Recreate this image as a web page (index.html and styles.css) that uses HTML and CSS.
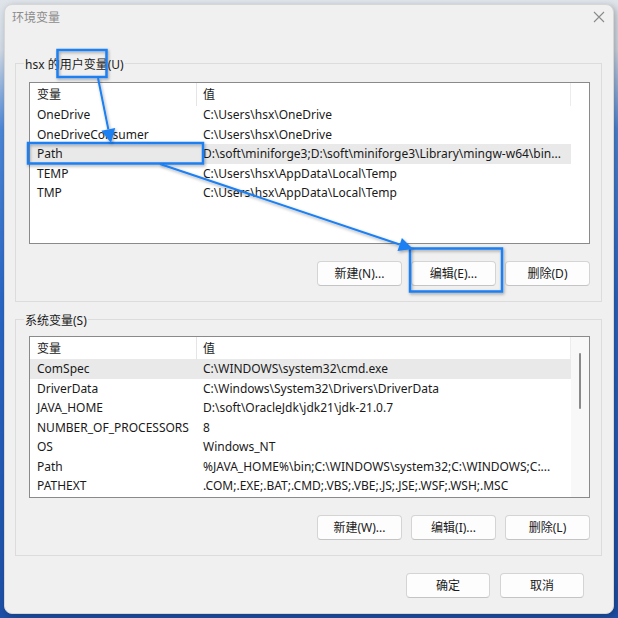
FILE: index.html
```html
<!DOCTYPE html>
<html lang="zh-CN">
<head>
<meta charset="utf-8">
<title>环境变量</title>
<link rel="stylesheet" href="styles.css">
</head>
<body>
<div class="window">
  <div class="titlebar">
    <span class="title">环境变量</span>
    <svg class="close" width="12" height="12" viewBox="0 0 12 12"><path d="M1 1L11 11M11 1L1 11" stroke="#8a8a8a" stroke-width="1.1" fill="none"/></svg>
  </div>
  <div class="content">
    <fieldset class="group">
      <legend>hsx 的用户变量(U)</legend>
      <div class="list">
        <div class="list-body">
          <div class="row head"><span class="c1">变量</span><span class="c2">值</span></div>
          <div class="row"><span class="c1">OneDrive</span><span class="c2">C:\Users\hsx\OneDrive</span></div>
          <div class="row"><span class="c1">OneDriveConsumer</span><span class="c2">C:\Users\hsx\OneDrive</span></div>
          <div class="row sel"><span class="c1">Path</span><span class="c2">D:\soft\miniforge3;D:\soft\miniforge3\Library\mingw-w64\bin...</span></div>
          <div class="row"><span class="c1">TEMP</span><span class="c2">C:\Users\hsx\AppData\Local\Temp</span></div>
          <div class="row"><span class="c1">TMP</span><span class="c2">C:\Users\hsx\AppData\Local\Temp</span></div>
        </div>
        <div class="scroll plain"></div>
      </div>
      <div class="buttons">
        <button class="btn">新建(N)...</button>
        <button class="btn">编辑(E)...</button>
        <button class="btn">删除(D)</button>
      </div>
    </fieldset>
    <fieldset class="group">
      <legend>系统变量(S)</legend>
      <div class="list">
        <div class="list-body">
          <div class="row head"><span class="c1">变量</span><span class="c2">值</span></div>
          <div class="row sel"><span class="c1">ComSpec</span><span class="c2">C:\WINDOWS\system32\cmd.exe</span></div>
          <div class="row"><span class="c1">DriverData</span><span class="c2">C:\Windows\System32\Drivers\DriverData</span></div>
          <div class="row"><span class="c1">JAVA_HOME</span><span class="c2">D:\soft\OracleJdk\jdk21\jdk-21.0.7</span></div>
          <div class="row"><span class="c1">NUMBER_OF_PROCESSORS</span><span class="c2">8</span></div>
          <div class="row"><span class="c1">OS</span><span class="c2">Windows_NT</span></div>
          <div class="row"><span class="c1">Path</span><span class="c2">%JAVA_HOME%\bin;C:\WINDOWS\system32;C:\WINDOWS;C:...</span></div>
          <div class="row"><span class="c1">PATHEXT</span><span class="c2">.COM;.EXE;.BAT;.CMD;.VBS;.VBE;.JS;.JSE;.WSF;.WSH;.MSC</span></div>
        </div>
        <div class="scroll track"><div class="thumb"></div></div>
      </div>
      <div class="buttons">
        <button class="btn">新建(W)...</button>
        <button class="btn">编辑(I)...</button>
        <button class="btn">删除(L)</button>
      </div>
    </fieldset>
    <div class="dialog-buttons">
      <button class="btn ok">确定</button>
      <button class="btn">取消</button>
    </div>
  </div>
</div>
<svg class="annot" width="618" height="618" viewBox="0 0 618 618">
  <defs>
    <filter id="sh" x="-20%" y="-20%" width="140%" height="140%">
      <feDropShadow dx="1" dy="1.5" stdDeviation="1.5" flood-color="#000" flood-opacity="0.35"/>
    </filter>
  </defs>
  <g filter="url(#sh)" stroke="#1b7ff2" fill="none" stroke-width="2.5">
    <rect x="57.5" y="50" width="49" height="27"/>
    <rect x="28" y="143" width="175" height="20.5"/>
    <rect x="410" y="248.5" width="92" height="43"/>
  </g>
  <g filter="url(#sh)">
    <line x1="98" y1="78" x2="108.3" y2="129.3" stroke="#1b7ff2" stroke-width="2"/>
    <polygon points="101.4,130.7 115.2,128 111,143" fill="#1b7ff2"/>
    <line x1="160" y1="164" x2="399.7" y2="244.5" stroke="#1b7ff2" stroke-width="2"/>
    <polygon points="397.5,251.1 401.9,237.9 413,249" fill="#1b7ff2"/>
  </g>
</svg>
</body>
</html>
```

FILE: styles.css
```css
html, body {
  margin: 0;
  padding: 0;
}
body {
  width: 618px;
  height: 618px;
  overflow: hidden;
  position: relative;
  background: linear-gradient(180deg, #dfe4ea 0px, #cfd8e3 50px, #4b86d6 130px, #2a66c4 300px, #1d4fa6 618px);
  font-family: "Noto Sans", "Noto Sans CJK SC", sans-serif;
  font-size: 12px;
  color: #000;
}
.window {
  margin: 4px 4px 0 4px;
  width: 610px;
  height: 610px;
  box-sizing: border-box;
  background: #f0f0f0;
  border-radius: 8px;
  border: 1px solid #d6d6d6;
  box-shadow: 2px 2px 6px rgba(0, 0, 0, 0.25);
  display: flex;
  flex-direction: column;
}
.titlebar {
  height: 23px;
  display: flex;
  align-items: center;
  justify-content: space-between;
  padding: 0 8px 0 7px;
}
.title {
  color: #8c8c8c;
  font-size: 12px;
  line-height: 16px;
  font-family: "Noto Sans CJK SC", sans-serif;
}
.close {
  display: block;
}
.content {
  padding: 25px 11px 0 10px;
  display: flex;
  flex-direction: column;
}
.group {
  margin: 0;
  border: 1px solid #dcdcdc;
  padding: 9px 11px 15px 13px;
  min-width: 0;
}
.group + .group {
  margin-top: 7px;
  padding-top: 7px;
}
legend {
  padding: 4px 1px 0 1px;
  margin-left: -5px;
  line-height: 16px;
  font-size: 12px;
  color: #1a1a1a;
}
.list {
  display: flex;
  height: 162px;
  box-sizing: border-box;
  border: 1px solid #8a8a8a;
  background: #fff;
}
.list-body {
  flex: 1;
  min-width: 0;
}
.row {
  display: grid;
  grid-template-columns: 167px 1fr;
  height: 19.5px;
  line-height: 19.5px;
  color: #1a1a1a;
}
.row.head {
  height: 22px;
  line-height: 23px;
}
.row.head .c1 {
  border-right: 1px solid #e5e5e5;
}
.row.head .c2 {
  border-right: 1px solid #ececec;
}
.row.sel {
  background: #e9e9e9;
}
.c1 {
  padding-left: 7px;
  white-space: nowrap;
  overflow: hidden;
}
.c2 {
  padding-left: 6px;
  white-space: nowrap;
}
.scroll {
  width: 18px;
  flex: none;
}
.scroll.track {
  background: #f8f8f8;
  display: flex;
  justify-content: center;
}
.thumb {
  width: 2px;
  height: 56px;
  margin-top: 16px;
  background: #8a8a8a;
  border-radius: 1px;
}
.buttons {
  display: flex;
  justify-content: flex-end;
  gap: 9px;
  margin-top: 17px;
}
.btn {
  width: 85px;
  height: 25px;
  box-sizing: border-box;
  background: #fdfdfd;
  border: 1px solid #d4d4d4;
  border-bottom-color: #c4c4c4;
  border-radius: 4px;
  font-family: "Noto Sans", "Noto Sans CJK SC", sans-serif;
  font-size: 12px;
  color: #1a1a1a;
  padding: 0;
  line-height: 22px;
}
.dialog-buttons {
  display: flex;
  justify-content: flex-end;
  gap: 10px;
  margin-top: 17px;
  padding-right: 18px;
}
.dialog-buttons .btn {
  width: 84px;
}
.annot {
  position: absolute;
  left: 0;
  top: 0;
  pointer-events: none;
}
```
